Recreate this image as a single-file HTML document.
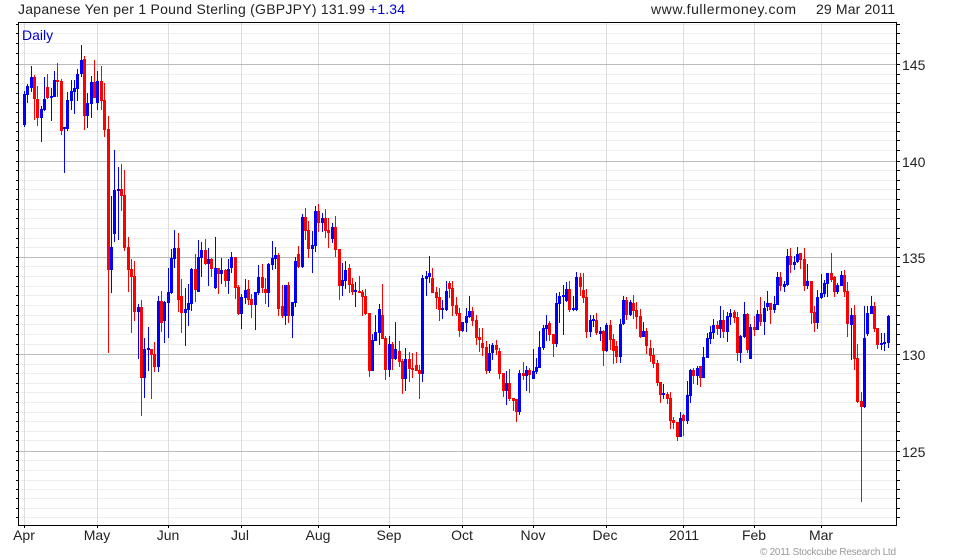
<!DOCTYPE html>
<html><head><meta charset="utf-8"><style>
html,body{margin:0;padding:0;background:#fff;width:980px;height:560px;overflow:hidden}
svg{display:block}
text{font-family:"Liberation Sans",sans-serif;font-size:14px;fill:#222}
</style></head><body>
<svg width="980" height="560" viewBox="0 0 980 560" xmlns="http://www.w3.org/2000/svg">
<g shape-rendering="crispEdges" fill="none">
<path stroke="#eeeeee" d="M19 24.5H896M19 33.5H896M19 43.5H896M19 53.5H896M19 74.5H896M19 83.5H896M19 93.5H896M19 103.5H896M19 112.5H896M19 122.5H896M19 131.5H896M19 140.5H896M19 150.5H896M19 170.5H896M19 180.5H896M19 189.5H896M19 199.5H896M19 209.5H896M19 218.5H896M19 228.5H896M19 238.5H896M19 247.5H896M19 266.5H896M19 276.5H896M19 286.5H896M19 295.5H896M19 305.5H896M19 315.5H896M19 324.5H896M19 334.5H896M19 344.5H896M19 364.5H896M19 373.5H896M19 383.5H896M19 392.5H896M19 402.5H896M19 412.5H896M19 421.5H896M19 431.5H896M19 440.5H896M19 460.5H896M19 470.5H896M19 480.5H896M19 489.5H896M19 498.5H896M19 508.5H896M19 517.5H896"/>
<path stroke="#dddddd" d="M24.5 23V525M97.5 23V525M168.5 23V525M241.5 23V525M318.5 23V525M389.5 23V525M462.5 23V525M533.5 23V525M606.5 23V525M683.5 23V525M754.5 23V525M821.5 23V525"/>
<path stroke="#bbbbbb" d="M19 64.5H896M19 161.5H896M19 257.5H896M19 354.5H896M19 451.5H896"/>
<path stroke="#0000ff" d="M24.5 91V127M27.5 84V103M31.5 66V92M41.5 106V142M44.5 77V111M51.5 88V121M54.5 71V97M64.5 127V173M67.5 92V131M71.5 80V110M74.5 80V114M77.5 69V101M81.5 45V77M87.5 93V128M91.5 76V118M97.5 71V110M111.5 196V293M114.5 150V242M118.5 167V240M138.5 304V359M144.5 338V398M148.5 327V371M158.5 296V372M164.5 301V343M168.5 268V338M171.5 249V294M174.5 230V268M185.5 288V346M188.5 284V326M191.5 268V311M198.5 240V292M201.5 242V277M208.5 248V286M215.5 237V289M221.5 258V284M228.5 259V294M231.5 252V273M241.5 294V329M245.5 279V304M255.5 292V330M258.5 265V295M268.5 263V307M272.5 241V270M275.5 247V269M285.5 285V325M292.5 302V338M295.5 257V307M302.5 214V268M312.5 231V273M315.5 206V252M322.5 213V232M332.5 223V243M342.5 263V296M345.5 261V289M355.5 282V307M372.5 334V371M375.5 315V341M379.5 304V345M389.5 336V377M395.5 322V360M405.5 348V391M422.5 275V382M426.5 271V296M429.5 256V283M442.5 300V319M446.5 281V311M462.5 322V332M466.5 308V332M469.5 296V318M489.5 344V373M492.5 343V360M506.5 371V405M519.5 370V415M526.5 366V391M533.5 349V379M536.5 358V374M539.5 331V368M543.5 325V350M546.5 315V341M556.5 293V347M559.5 292V323M563.5 285V335M566.5 282V302M573.5 296V311M576.5 272V311M590.5 315V337M593.5 315V327M600.5 327V341M606.5 323V352M620.5 319V363M623.5 296V325M630.5 300V316M643.5 322V337M663.5 384V399M680.5 412V437M687.5 381V424M690.5 369V403M697.5 366V385M703.5 347V378M707.5 333V358M710.5 326V344M713.5 319V339M720.5 306V338M727.5 312V342M730.5 309V325M740.5 335V363M744.5 302V338M750.5 324V359M757.5 310V330M764.5 301V335M767.5 291V311M774.5 296V313M777.5 272V305M784.5 281V292M787.5 249V286M794.5 256V270M797.5 247V263M807.5 264V289M817.5 290V329M821.5 274V299M824.5 280V297M827.5 273V297M837.5 283V294M841.5 271V286M851.5 308V360M864.5 306V408M867.5 306V336M871.5 296V314M881.5 333V350M884.5 333V351M888.5 315V348"/>
<path stroke="#ff0000" d="M34.5 75V120M37.5 86V126M47.5 74V99M57.5 63V97M61.5 79V135M84.5 56V130M94.5 60V98M101.5 66V110M104.5 83V137M108.5 116V353M121.5 164V211M124.5 170V251M128.5 237V292M131.5 259V333M134.5 261V321M141.5 300V416M151.5 349V399M154.5 342V372M161.5 291V332M178.5 233V312M181.5 279V333M195.5 254V302M205.5 239V265M211.5 258V277M218.5 268V294M225.5 269V287M235.5 257V299M238.5 285V315M248.5 280V305M251.5 294V318M262.5 264V293M265.5 278V304M278.5 253V316M282.5 285V318M288.5 282V323M298.5 246V268M305.5 208V240M308.5 221V258M318.5 204V232M325.5 209V238M328.5 218V248M335.5 216V257M339.5 249V300M349.5 264V293M352.5 278V295M359.5 276V293M362.5 290V316M365.5 289V315M369.5 313V377M382.5 284V339M385.5 336V380M392.5 342V370M399.5 341V367M402.5 359V394M409.5 352V382M412.5 353V378M416.5 352V371M419.5 365V399M432.5 268V293M436.5 287V309M439.5 288V321M449.5 281V298M452.5 281V316M456.5 297V316M459.5 308V337M472.5 307V326M476.5 315V345M479.5 328V352M482.5 328V356M486.5 341V374M496.5 340V355M499.5 348V379M503.5 373V397M509.5 369V401M513.5 398V411M516.5 399V422M523.5 362V380M529.5 368V393M549.5 321V341M553.5 334V357M569.5 281V312M580.5 273V296M583.5 273V303M586.5 289V338M596.5 313V335M603.5 330V366M610.5 320V350M613.5 334V364M616.5 341V363M626.5 297V320M633.5 295V319M636.5 302V329M640.5 309V338M646.5 328V354M650.5 340V362M653.5 348V368M657.5 360V386M660.5 382V403M667.5 392V404M670.5 392V429M673.5 417V429M677.5 422V441M683.5 414V436M693.5 368V384M700.5 366V387M717.5 321V335M723.5 310V338M734.5 310V323M737.5 312V361M747.5 313V353M754.5 316V336M760.5 297V326M770.5 303V324M780.5 272V291M790.5 248V273M800.5 253V269M804.5 248V291M811.5 281V324M814.5 306V332M831.5 253V282M834.5 276V297M844.5 270V297M847.5 282V337M854.5 305V370M857.5 344V403M861.5 392V502M874.5 302V332M877.5 328V349"/>
<path stroke="#0000ff" stroke-width="3" d="M24.5 94V125M27.5 86V95M31.5 77V88M41.5 109V118M44.5 99V110M51.5 96V98M54.5 80V97M64.5 127V129M67.5 100V129M71.5 91V101M74.5 88V92M77.5 74V89M81.5 60V74M87.5 103V116M91.5 82V104M97.5 81V103M111.5 247V270M114.5 190V234M118.5 189V191M138.5 307V312M144.5 349V378M148.5 348V350M158.5 301V367M164.5 302V321M168.5 292V303M171.5 258V293M174.5 248V259M185.5 309V313M188.5 303V310M191.5 269V304M198.5 257V292M201.5 250V258M208.5 259V264M215.5 268V288M221.5 270V274M228.5 269V281M231.5 257V268M241.5 297V314M245.5 290V298M255.5 292V305M258.5 277V293M268.5 264V293M272.5 258V265M275.5 255V259M285.5 285V316M292.5 302V316M295.5 261V303M302.5 217V267M312.5 245V249M315.5 211V246M322.5 218V223M332.5 227V239M342.5 280V286M345.5 270V281M355.5 290V292M372.5 340V371M375.5 332V341M379.5 309V333M389.5 344V370M395.5 349V359M405.5 359V379M422.5 278V374M426.5 276V279M429.5 273V277M442.5 308V310M446.5 291V310M462.5 322V331M466.5 316V323M469.5 311V317M489.5 353V371M492.5 345V353M506.5 383V391M519.5 373V412M526.5 370V376M533.5 371V379M536.5 367V372M539.5 347V368M543.5 328V348M546.5 325V329M556.5 303V344M559.5 296V304M563.5 295V297M566.5 289V301M573.5 308V310M576.5 277V310M590.5 320V332M593.5 319V321M600.5 331V334M606.5 325V351M620.5 324V357M623.5 300V324M630.5 302V315M643.5 331V337M663.5 393V395M680.5 418V437M687.5 395V421M690.5 370V396M697.5 368V376M703.5 357V378M707.5 338V358M710.5 332V339M713.5 325V333M720.5 320V329M727.5 316V332M730.5 313V317M740.5 336V353M744.5 314V337M750.5 327V359M757.5 314V330M764.5 308V322M767.5 303V307M774.5 304V310M777.5 277V305M784.5 284V287M787.5 256V285M794.5 262V265M797.5 254V262M807.5 281V286M817.5 297V323M821.5 293V298M824.5 283V294M827.5 273V284M837.5 285V292M841.5 275V286M851.5 315V325M864.5 338V407M867.5 313V334M871.5 306V314M881.5 343V345M884.5 342V344M888.5 316V343"/>
<path stroke="#ff0000" stroke-width="3" d="M34.5 77V99M37.5 99V118M47.5 87V98M57.5 80V82M61.5 81V131M84.5 59V116M94.5 82V98M101.5 81V101M104.5 100V130M108.5 129V270M121.5 189V196M124.5 195V248M128.5 247V270M131.5 269V277M134.5 276V312M141.5 307V378M151.5 349V355M154.5 354V367M161.5 301V323M178.5 248V300M181.5 296V313M195.5 269V290M205.5 250V264M211.5 259V269M218.5 268V274M225.5 270V281M235.5 257V288M238.5 287V314M248.5 289V300M251.5 299V305M262.5 277V288M265.5 289V293M278.5 255V309M282.5 306V316M288.5 285V316M298.5 254V267M305.5 217V231M308.5 230V249M318.5 211V223M325.5 218V231M328.5 230V233M335.5 227V250M339.5 249V286M349.5 268V285M352.5 284V292M359.5 291V293M362.5 292V297M365.5 296V314M369.5 313V371M382.5 315V339M385.5 338V370M392.5 344V359M399.5 351V362M402.5 361V379M409.5 359V369M412.5 368V370M416.5 365V371M419.5 370V374M432.5 278V293M436.5 292V298M439.5 297V310M449.5 283V289M452.5 288V306M456.5 305V314M459.5 313V331M472.5 311V321M476.5 320V338M479.5 337V340M482.5 343V348M486.5 347V371M496.5 345V350M499.5 351V374M503.5 373V391M509.5 383V399M513.5 398V401M516.5 399V412M523.5 373V376M529.5 370V375M549.5 323V335M553.5 334V344M569.5 289V310M580.5 277V287M583.5 290V298M586.5 297V332M596.5 320V333M603.5 331V351M610.5 325V340M613.5 339V351M616.5 346V357M626.5 300V315M633.5 303V311M636.5 310V317M640.5 316V337M646.5 331V346M650.5 348V356M653.5 355V364M657.5 363V383M660.5 382V395M667.5 394V399M670.5 398V421M673.5 420V423M677.5 422V437M683.5 415V421M693.5 370V376M700.5 366V378M717.5 325V329M723.5 320V332M734.5 312V318M737.5 317V353M747.5 314V350M754.5 327V330M760.5 314V322M770.5 303V310M780.5 277V286M790.5 256V265M800.5 253V260M804.5 259V286M811.5 281V313M814.5 312V323M831.5 273V280M834.5 277V292M844.5 275V292M847.5 291V324M854.5 315V359M857.5 358V402M861.5 401V407M874.5 306V329M877.5 328V345"/>
<path stroke="#000000" d="M18.5 22.5H896.5V525.5H18.5Z"/>
<path stroke="#000000" d="M16 24.5H18M16 33.5H18M16 43.5H18M16 53.5H18M16 64.5H18M16 74.5H18M16 83.5H18M16 93.5H18M16 103.5H18M16 112.5H18M16 122.5H18M16 131.5H18M16 140.5H18M16 150.5H18M16 161.5H18M16 170.5H18M16 180.5H18M16 189.5H18M16 199.5H18M16 209.5H18M16 218.5H18M16 228.5H18M16 238.5H18M16 247.5H18M16 257.5H18M16 266.5H18M16 276.5H18M16 286.5H18M16 295.5H18M16 305.5H18M16 315.5H18M16 324.5H18M16 334.5H18M16 344.5H18M16 354.5H18M16 364.5H18M16 373.5H18M16 383.5H18M16 392.5H18M16 402.5H18M16 412.5H18M16 421.5H18M16 431.5H18M16 440.5H18M16 451.5H18M16 460.5H18M16 470.5H18M16 480.5H18M16 489.5H18M16 498.5H18M16 508.5H18M16 517.5H18"/>
<path stroke="#000000" d="M897 24.5H900M897 33.5H900M897 43.5H900M897 53.5H900M897 64.5H900M897 74.5H900M897 83.5H900M897 93.5H900M897 103.5H900M897 112.5H900M897 122.5H900M897 131.5H900M897 140.5H900M897 150.5H900M897 161.5H900M897 170.5H900M897 180.5H900M897 189.5H900M897 199.5H900M897 209.5H900M897 218.5H900M897 228.5H900M897 238.5H900M897 247.5H900M897 257.5H900M897 266.5H900M897 276.5H900M897 286.5H900M897 295.5H900M897 305.5H900M897 315.5H900M897 324.5H900M897 334.5H900M897 344.5H900M897 354.5H900M897 364.5H900M897 373.5H900M897 383.5H900M897 392.5H900M897 402.5H900M897 412.5H900M897 421.5H900M897 431.5H900M897 440.5H900M897 451.5H900M897 460.5H900M897 470.5H900M897 480.5H900M897 489.5H900M897 498.5H900M897 508.5H900M897 517.5H900"/>
<path stroke="#000000" d="M24.5 526V528M97.5 526V528M168.5 526V528M241.5 526V528M318.5 526V528M389.5 526V528M462.5 526V528M533.5 526V528M606.5 526V528M683.5 526V528M754.5 526V528M821.5 526V528"/>
</g>
<text x="18" y="14" textLength="347" lengthAdjust="spacing">Japanese Yen per 1 Pound Sterling (GBPJPY) 131.99</text>
<text x="369" y="14" textLength="36" lengthAdjust="spacing" style="fill:#0000cc">+1.34</text>
<text x="651" y="14" textLength="145" lengthAdjust="spacing">www.fullermoney.com</text>
<text x="816" y="14" textLength="79" lengthAdjust="spacing">29 Mar 2011</text>
<text x="22" y="40" style="fill:#0000cc">Daily</text>
<text x="902" y="70">145</text>
<text x="902" y="167">140</text>
<text x="902" y="263">135</text>
<text x="902" y="360">130</text>
<text x="902" y="457">125</text>
<g text-anchor="middle">
<text x="24" y="540">Apr</text>
<text x="97" y="540">May</text>
<text x="168" y="540">Jun</text>
<text x="240" y="540">Jul</text>
<text x="318" y="540">Aug</text>
<text x="389" y="540">Sep</text>
<text x="462" y="540">Oct</text>
<text x="533" y="540">Nov</text>
<text x="605" y="540">Dec</text>
<text x="684" y="540">2011</text>
<text x="754" y="540">Feb</text>
<text x="821" y="540">Mar</text>
</g>
<text x="760" y="555" textLength="136" lengthAdjust="spacing" style="font-size:10px;fill:#999">© 2011 Stockcube Research Ltd</text>
</svg>
</body></html>
